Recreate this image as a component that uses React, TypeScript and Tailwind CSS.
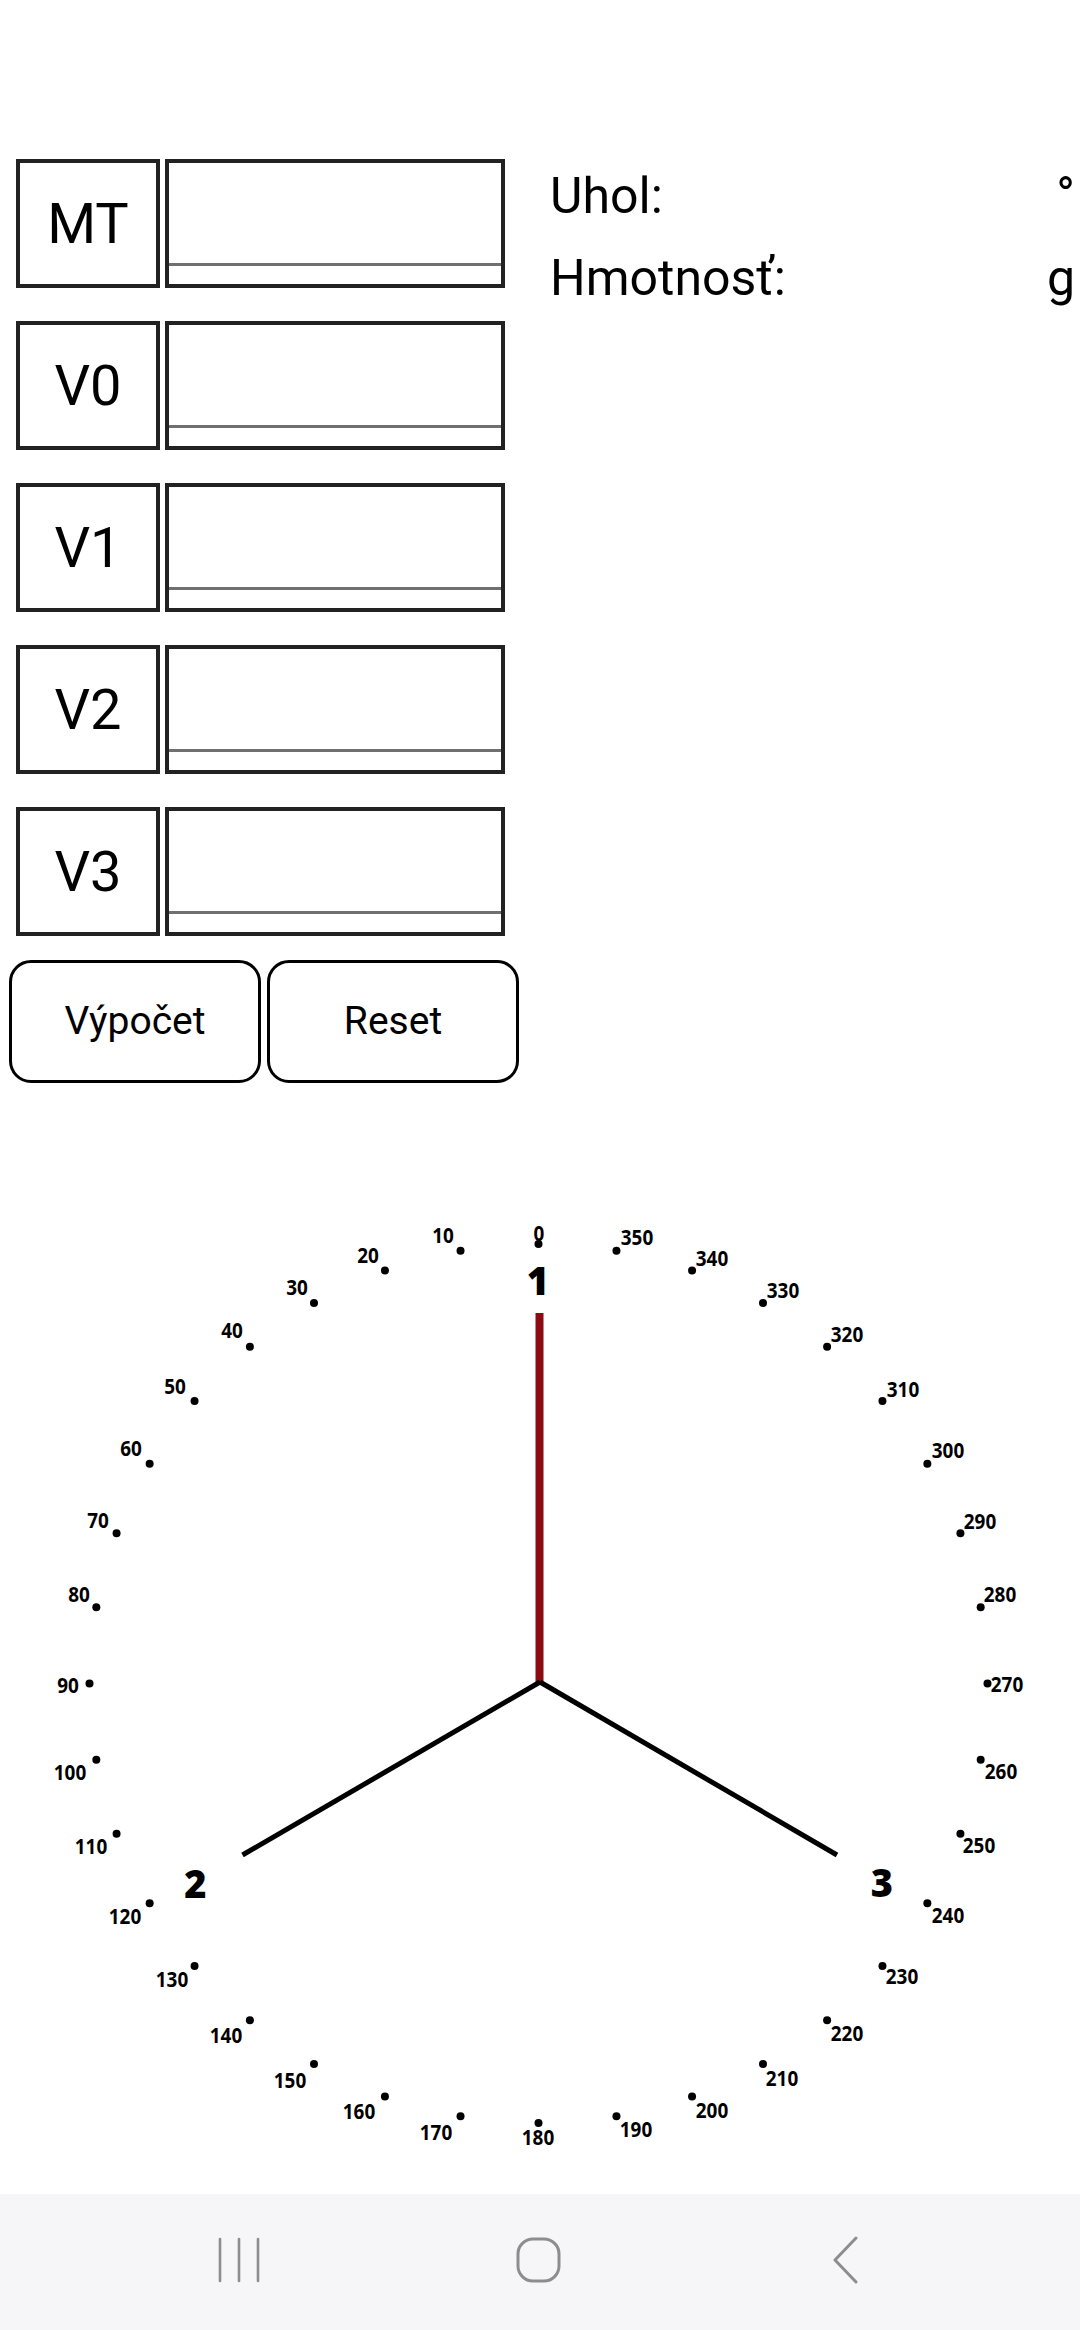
import React from 'react';

const labels = ['MT', 'V0', 'V1', 'V2', 'V3'];

// dial geometry, in page coordinates
const CX = 538.5;
const CY = 1683.5;
const RX = 449;
const RY = 439.5;

// label centres measured off the dial picture
const tickLabels: [number, number, number][] = [
  [0, 539, 1233],
  [10, 443, 1235],
  [20, 368, 1255],
  [30, 297, 1287],
  [40, 232, 1330],
  [50, 175, 1386],
  [60, 131, 1448],
  [70, 98, 1520],
  [80, 79, 1594],
  [90, 68, 1685],
  [100, 70, 1772],
  [110, 91, 1846],
  [120, 125, 1916],
  [130, 172, 1979],
  [140, 226, 2035],
  [150, 290, 2080],
  [160, 359, 2111],
  [170, 436, 2132],
  [180, 538, 2137],
  [190, 636, 2129],
  [200, 712, 2110],
  [210, 782, 2078],
  [220, 847, 2033],
  [230, 902, 1976],
  [240, 948, 1915],
  [250, 979, 1845],
  [260, 1001, 1771],
  [270, 1007, 1684],
  [280, 1000, 1594],
  [290, 980, 1521],
  [300, 948, 1450],
  [310, 903, 1389],
  [320, 847, 1334],
  [330, 783, 1290],
  [340, 712, 1258],
  [350, 637, 1237],
];

function Dial() {
  return (
    <svg width="1080" height="1111" viewBox="0 1083 1080 1111" className="block">
      {tickLabels.map(([deg, lx, ly]) => {
        const a = (deg * Math.PI) / 180;
        const x = CX - RX * Math.sin(a);
        const y = CY - RY * Math.cos(a);
        const txt = String(deg);
        return (
          <g key={deg}>
            <circle cx={x} cy={y} r={4} fill="#000" />
            <text
              x={lx}
              y={ly + 7.5}
              textAnchor="middle"
              fontFamily="'Open Sans', 'DejaVu Sans', sans-serif"
              fontWeight={700}
              fontSize={22}
              textLength={txt.length * 10.8}
              lengthAdjust="spacingAndGlyphs"
              fill="#000"
            >
              {txt}
            </text>
          </g>
        );
      })}

      <rect x={535.5} y={1313} width={8} height={370} fill="#8c0b12" />
      <line x1={540} y1={1682} x2={242.5} y2={1855} stroke="#000" strokeWidth={5} />
      <line x1={540} y1={1682} x2={837} y2={1855} stroke="#000" strokeWidth={5} />

      <g fontFamily="'Open Sans', 'DejaVu Sans', sans-serif" fontWeight={800} fontSize={38} fill="#000" textAnchor="middle">
        <text x={538} y={1294.5}>1</text>
        <text x={195.5} y={1898}>2</text>
        <text x={882} y={1897}>3</text>
      </g>
    </svg>
  );
}

function NavBar() {
  return (
    <div className="h-[136px] bg-[#f6f6f8] flex items-center pb-[4px]">
      <svg width="42" height="46" viewBox="0 0 42 46" className="ml-[218px]">
        <g stroke="#8d8d8d" strokeWidth="2.6" strokeLinecap="round">
          <line x1="2" y1="2" x2="2" y2="44" />
          <line x1="21" y1="2" x2="21" y2="44" />
          <line x1="40" y1="2" x2="40" y2="44" />
        </g>
      </svg>
      <svg width="46" height="46" viewBox="0 0 46 46" className="ml-[256px]">
        <rect x="2" y="2" width="41" height="42" rx="15" fill="none" stroke="#8d8d8d" strokeWidth="3" />
      </svg>
      <svg width="28" height="48" viewBox="0 0 28 48" className="ml-[270px]">
        <polyline points="24,2 3,24 24,46" fill="none" stroke="#8d8d8d" strokeWidth="3" strokeLinecap="round" strokeLinejoin="round" />
      </svg>
    </div>
  );
}

export default function App() {
  return (
    <div className="w-[1080px] h-[2330px] bg-white flex flex-col overflow-hidden font-['Roboto','Noto_Sans',sans-serif] text-black">
      <div className="flex pt-[155px] h-[1083px]">
        {/* Inputs and buttons */}
        <div className="w-[540px] flex flex-col pt-[4px]">
          <div className="flex flex-col gap-[33px] ml-[16px]">
            {labels.map((l) => (
              <div key={l} className="flex gap-[5px] h-[129px]">
                <div className="w-[144px] h-full border-[4px] border-[#222] flex items-center justify-center text-[56px]">
                  {l}
                </div>
                <div className="w-[340px] h-full border-[4px] border-[#222] flex flex-col justify-end px-0 pb-[18px]">
                  <input className="w-full h-[40px] border-b-[3px] border-[#707070] outline-none bg-transparent text-[40px]" />
                </div>
              </div>
            ))}
          </div>
          <div className="flex gap-[6px] ml-[9px] mt-[24px]">
            <button className="w-[252px] h-[123px] border-[3px] border-black rounded-[22px] text-[39px] bg-white">
              Výpočet
            </button>
            <button className="w-[252px] h-[123px] border-[3px] border-black rounded-[22px] text-[39px] bg-white">
              Reset
            </button>
          </div>
        </div>

        {/* Results */}
        <div className="flex-1 flex flex-col pl-[10px] pr-[5px] text-[50px] leading-[82px]">
          <div className="flex justify-between">
            <span>Uhol:</span>
            <span>°</span>
          </div>
          <div className="flex justify-between">
            <span>Hmotnosť:</span>
            <span>g</span>
          </div>
        </div>
      </div>

      <Dial />
      <NavBar />
    </div>
  );
}
